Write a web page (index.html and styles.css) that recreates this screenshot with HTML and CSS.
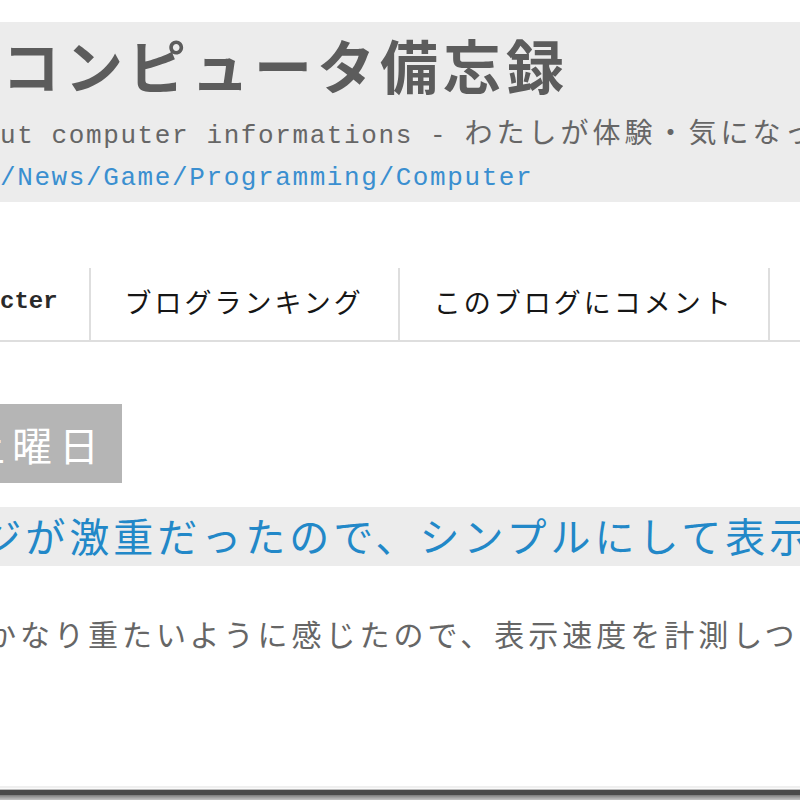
FILE: index.html
```html
<!DOCTYPE html>
<html lang="ja">
<head>
  <meta charset="UTF-8">
  <title>コンピュータ備忘録</title>
  <link rel="stylesheet" href="styles.css">
</head>
<body>

  <header class="blog-header">
    <h1 class="blog-title">コンピュータ備忘録</h1>
    <p class="blog-desc">ut computer informations - <span class="jp">わたしが体験・気になったこと</span></p>
    <p class="blog-links"><a href="#">/News/Game/Programming/Computer</a></p>
  </header>

  <nav class="tabs">
    <a class="tab tab-mono" href="#">cter</a>
    <a class="tab" href="#">ブログランキング</a>
    <a class="tab" href="#">このブログにコメント</a>
    <a class="tab" href="#">お問い合わせ</a>
  </nav>

  <!-- post -->
  <div class="date"><span>土曜日</span></div>
  <h2 class="post-title"><a href="#">ページが激重だったので、シンプルにして表示速度を改善</a></h2>
  <p class="post-body">かなり重たいように感じたので、表示速度を計測しつつ</p>

  <div class="shadow"></div>
</body>
</html>
```

FILE: styles.css
```css
:root {
  --band: #ececec;
  --grey-text: #666;
  --blue: #2288c8;
  --line: #dedede;
}

html, body {
  margin: 0;
  height: 800px;
  overflow: hidden;
}

body {
  display: flex;
  flex-direction: column;
  background: #fff;
  font-family: "Noto Sans CJK JP", sans-serif;
  white-space: nowrap;
}

a {
  text-decoration: none;
  color: inherit;
}

.blog-header {
  margin-top: 22px;
  padding: 7px 0 3px;
  background: var(--band);
}

.blog-title {
  margin: 0;
  padding-left: 2px;
  font-size: 58px;
  line-height: 70px;
  font-weight: bold;
  letter-spacing: 5px;
  color: #5c5c5c;
}

.blog-desc,
.blog-links {
  margin: 0;
  height: 42px;
  font-family: "Liberation Mono", monospace;
  font-size: 26px;
  line-height: 42px;
  letter-spacing: 1.6px;
}

.blog-desc {
  margin-top: 16px;
  color: var(--grey-text);
}

.blog-desc .jp {
  font-family: "Noto Sans CJK JP", sans-serif;
  font-size: 28px;
  line-height: 28px;
  letter-spacing: 4px;
}

.blog-links a {
  color: #3a8fd0;
}

.tabs {
  display: flex;
  margin-top: 66px;
  border-bottom: 2px solid var(--line);
}

.tab {
  flex: none;
  height: 72px;
  padding: 0 34px;
  border-left: 2px solid var(--line);
  font-size: 27px;
  line-height: 67px;
  letter-spacing: 3px;
  color: #161616;
  box-sizing: border-box;
}

.tab-mono {
  padding-left: 0;
  padding-right: 31px;
  border-left: none;
  font-family: "Liberation Mono", monospace;
  font-size: 24px;
  font-weight: bold;
  letter-spacing: 0;
  color: #2a2a2a;
}

.date {
  margin-top: 62px;
  height: 79px;
}

.date span {
  display: inline-block;
  margin-left: -55px;
  padding: 2px 16px 0 20px;
  background: #b5b5b5;
  color: #fff;
  font-size: 40px;
  line-height: 77px;
  letter-spacing: 7px;
}

.post-title {
  margin: 24px 0 0;
  height: 59px;
  background: var(--band);
  font-size: 40px;
  font-weight: normal;
  line-height: 57px;
  letter-spacing: 4px;
  text-indent: -106px;
  color: var(--blue);
}

.post-body {
  margin: 47px 0 0;
  font-size: 30px;
  line-height: 40px;
  letter-spacing: 4px;
  text-indent: -14px;
  color: var(--grey-text);
}

.shadow {
  margin-top: auto;
  height: 15px;
  background: linear-gradient(to bottom,
    #fff 0, #fff 1px,
    #efefef 1px, #efefef 3px,
    #fafafa 3px, #fafafa 4px,
    #bdbdbd 4px, #bdbdbd 5px,
    #4a4a4a 5px, #4a4a4a 10px,
    #7a7a7a 10px, #9a9a9a 12px,
    #c4c4c4 15px);
}
```
